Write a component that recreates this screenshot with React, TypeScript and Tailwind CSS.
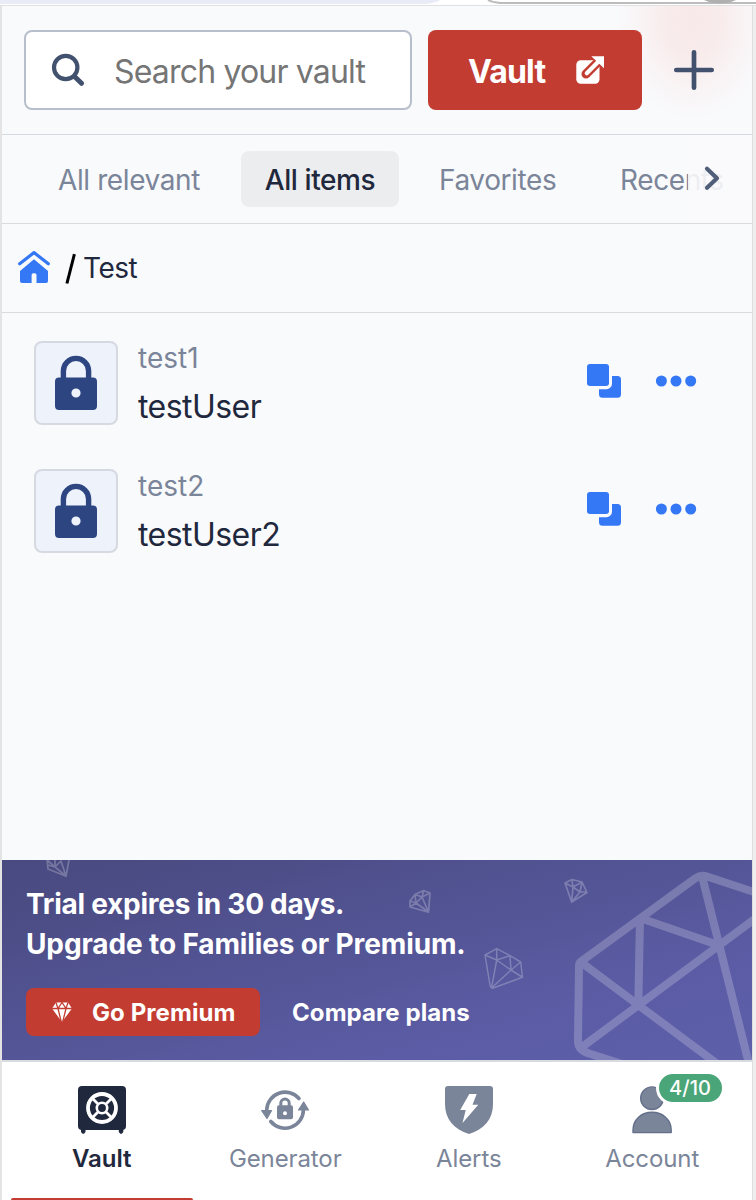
import React from "react";

function SearchIcon() {
  return (
    <svg width="34" height="34" viewBox="51 53 34 34" fill="none" stroke="#42526e" strokeLinecap="round">
      <circle cx="65.700" cy="67.500" r="11.700" strokeWidth="4.200" />
      <path d="M74.500 76.500L81.500 83.300" strokeWidth="5" />
    </svg>
  );
}

function ExternalIcon() {
  return (
    <svg width="30" height="30" viewBox="575 55 30 30">
      <rect x="576.300" y="60.200" width="23.200" height="23.600" rx="4.500" fill="#fff" />
      <path d="M586 74L603 57" stroke="#c33c32" strokeWidth="9" strokeLinecap="round" />
      <path d="M586.800 73.200L600 60" stroke="#fff" strokeWidth="4.200" strokeLinecap="round" />
      <path d="M591.300 56.200H604V68.200Z" fill="#fff" />
    </svg>
  );
}

function LockTile() {
  return (
    <div className="flex h-[84px] w-[84px] items-center justify-center rounded-lg border-2 border-[#d5d9e0] bg-[#eef2fb]">
      <svg width="44" height="56" viewBox="54 355 44 56">
        <path d="M63.400 380V371a12.600 12.600 0 0 1 25.200 0V380" fill="none" stroke="#2d4681" strokeWidth="5.400" />
        <path
          fillRule="evenodd"
          fill="#2d4681"
          d="M59 377.500H93a4 4 0 0 1 4 4V406a4 4 0 0 1-4 4H59a4 4 0 0 1-4-4V381.500a4 4 0 0 1 4-4ZM76 388.400a4.600 4.600 0 1 0 0 9.200a4.600 4.600 0 1 0 0-9.200Z"
        />
      </svg>
    </div>
  );
}

function CopyIcon() {
  return (
    <svg width="36" height="36" viewBox="586 363 36 36" fill="#3478f6">
      <rect x="587" y="364" width="22" height="22" rx="3" />
      <path d="M612 376H617.500a3.500 3.500 0 0 1 3.500 3.500V394.200a3.500 3.500 0 0 1-3.500 3.500H602.500a3.500 3.500 0 0 1-3.500-3.500V389.200H606.500a5.500 5.500 0 0 0 5.500-5.500Z" />
    </svg>
  );
}

function Item({ title, user }: { title: string; user: string }) {
  return (
    <div className="flex h-32 items-start pt-7 pl-8">
      <LockTile />
      <div className="ml-5 flex w-[448px] flex-col">
        <span className="-mt-[3px] h-10 text-[28px] leading-10 text-[#7b8599]">{title}</span>
        <span className="mt-[7px] h-11 text-[32px] leading-[44px] tracking-[-0.55px] text-[#1f283c]">{user}</span>
      </div>
      <div className="mt-[22px] flex items-center gap-8">
        <CopyIcon />
        <svg width="44" height="14" viewBox="654 374 44 14" fill="#3478f6">
          <circle cx="661.400" cy="381" r="5.500" />
          <circle cx="676" cy="381" r="5.500" />
          <circle cx="690.700" cy="381" r="5.500" />
        </svg>
      </div>
    </div>
  );
}

function BannerArt() {
  return (
    <svg width="750" height="200" viewBox="2 860 750 200" className="absolute inset-0" fill="none" stroke="#fff" strokeLinejoin="round">
      <defs>
        <filter id="soft" x="-10%" y="-50%" width="120%" height="200%">
          <feGaussianBlur stdDeviation="0.600" />
        </filter>
      </defs>
      <g opacity="0.21" strokeWidth="8">
        <path d="M760 894L707 876.500Q701 874.500 695 878.500L581 961.500Q579 963 579 966L578 1041Q578 1050 589 1053.500L625 1065" />
        <path d="M640 918L638.300 1005M640 918L718 945M702 876L749 1064M756 918L582 1047M582 963L716 1063" />
      </g>
      <path
        opacity="0.24"
        strokeWidth="1.500"
        d="M485 955L496.700 948.700L510 955.700L520.700 962L522.400 977.300L492.500 988.300Q490.500 988 490 985ZM485 955L496.700 960L496.700 949M510 955.700L496.700 960L511 970L510 955.700M520.700 962L511 970L522 977M496.700 960L491.500 988L511 970"
      />
      <g opacity="0.24" strokeWidth="1.700" filter="url(#soft)">
        <path d="M410 901L415 894.500L423.500 890.500L430 893L428.500 912.300L410 907ZM415 894.500L422 897L430 893M423.500 891L422 897L416 903L410 901M415 895L416 903L410 907M416 903L428.500 912L422 897" />
        <path d="M565 883L572 879.500L582 882L587 892.500L571.700 902ZM565 883L573 887L572 880M573 887L582 882L580 892L587 892M573 887L580 892L571.700 902L573 887" />
        <path d="M47 858L48 869L66 876.300L69 860M48 865L55 867L66 876L61 861L55 867L47 860M55 867L55 860" />
      </g>
    </svg>
  );
}

function VaultNavIcon() {
  return (
    <svg width="48" height="48" viewBox="78 1086 48 48">
      <rect x="78" y="1086" width="48" height="44" rx="4" fill="#1f283c" />
      <path d="M81 1129H85.500V1132L84 1133.800H82.500L81 1132ZM118.800 1129H123.300V1132L121.800 1133.800H120.300L118.800 1132Z" fill="#1f283c" />
      <g fill="none" stroke="#fff">
        <circle cx="102" cy="1108" r="14" strokeWidth="3.800" />
        <circle cx="102" cy="1108" r="5.200" strokeWidth="2.600" />
        <path strokeWidth="2.800" d="M93 1099L98.500 1104.500M111 1099L105.500 1104.500M93 1117L98.500 1111.500M111 1117L105.500 1111.500" />
      </g>
    </svg>
  );
}

function GeneratorNavIcon() {
  return (
    <svg width="48" height="48" viewBox="261 1086 48 48">
      <g fill="none" stroke="#7b8599" strokeWidth="3.600" strokeLinecap="round">
        <path d="M266.700 1110A18.400 18.400 0 0 1 299 1098.500" />
        <path d="M303.400 1110A18.400 18.400 0 0 1 270.800 1121.500" />
        <path d="M280.800 1106V1103.200a4.200 4.200 0 0 1 8.400 0V1106" strokeWidth="3" strokeLinecap="butt" />
      </g>
      <g fill="#7b8599" stroke="#7b8599" strokeWidth="1.200" strokeLinejoin="round">
        <path d="M261.600 1110.500H271.600L267 1118.500Z" />
        <path d="M298.500 1110H308.500L303.700 1102Z" />
      </g>
      <rect x="277" y="1105.300" width="16" height="14" rx="2" fill="#7b8599" />
      <circle cx="285" cy="1113.300" r="2" fill="#fff" />
    </svg>
  );
}

function AlertsNavIcon() {
  return (
    <svg width="48" height="48" viewBox="445 1086 48 48">
      <path d="M448 1086H490a3 3 0 0 1 3 3V1104C493 1119 484 1129.500 469 1134C454 1129.500 445 1119 445 1104V1089a3 3 0 0 1 3-3Z" fill="#7b8599" />
      <path d="M469.300 1094H476.700L472.500 1104.800H478.300L462.500 1123L465.700 1110H460.200Z" fill="#fff" />
    </svg>
  );
}

function AccountNavIcon() {
  return (
    <svg width="48" height="48" viewBox="628 1086 48 48" fill="#7b8599" stroke="#64708a" strokeWidth="1.400">
      <circle cx="652" cy="1098.200" r="11.300" />
      <path d="M633 1132.600V1130C633 1119.500 641.500 1112.300 652 1112.300S671.200 1119.500 671.200 1130V1132.600Z" strokeLinejoin="round" />
    </svg>
  );
}

function NavItem({ icon, label, active, badge }: { icon: React.ReactNode; label: string; active?: boolean; badge?: string }) {
  return (
    <div className="relative flex flex-1 flex-col items-center pt-6">
      {icon}
      <span
        className={
          active
            ? "mt-[9px] text-2xl leading-8 font-semibold text-[#1f283c]"
            : "mt-[9px] text-2xl leading-8 tracking-[-0.1px] text-[#7b8599]"
        }
      >
        {label}
      </span>
      {badge && (
        <span className="absolute top-[9px] left-[95px] flex h-[34px] w-[69px] items-center justify-center rounded-full border-[3px] border-white bg-[#4aa578] text-xl font-medium tracking-[0.1px] text-white">
          {badge}
        </span>
      )}
    </div>
  );
}

export default function App() {
  return (
    <div className="flex h-[1200px] w-[756px] flex-col overflow-hidden bg-white font-['Inter','Liberation_Sans',sans-serif]">
      <svg width="756" height="5" viewBox="0 0 756 5" className="shrink-0">
        <path d="M0 0H440Q436 3 425 4H0Z" fill="#e9ebf6" />
        <path d="M488 0Q494 3 505 3H756" fill="none" stroke="#bcbcbc" strokeWidth="2" />
        <path d="M704 0H736Q729 3.500 720 3.500T704 0Z" fill="#b0b0b0" />
      </svg>
      <div className="flex h-[1195px] border-t border-[#dfe0e1] bg-[#e4e4e5]">
        <main className="ml-0.5 flex w-[750px] flex-col overflow-hidden bg-[#f9fafc]">
          <header className="flex h-[129px] shrink-0 items-start border-b border-[#d5d9e0] bg-[radial-gradient(ellipse_76px_100px_at_691px_14px,#f8e9e9_0%,#f8ebeb_35%,#f9f3f4_65%,#f9fafc_100%)] pt-6 pl-[22px]">
            <div className="flex h-20 w-[388px] items-center rounded-lg border-2 border-[#b8bfcc] bg-white pl-[25px]">
              <SearchIcon />
              <span className="mt-[3px] ml-[29px] text-[32px] tracking-[-0.82px] whitespace-nowrap text-[#757575]">Search your vault</span>
            </div>
            <button className="ml-4 flex h-20 w-[214px] items-center rounded-lg bg-[#c33c32] pl-10 text-[32px] font-bold text-white">
              <span className="mt-[3px] w-[107px] text-left tracking-[-0.8px]">Vault</span>
              <ExternalIcon />
            </button>
            <svg width="44" height="80" viewBox="672 30 44 80" className="ml-[30px]">
              <path d="M676.300 70H711.700M694 52.300V87.700" stroke="#42526e" strokeWidth="4.700" strokeLinecap="round" />
            </svg>
          </header>
          <nav className="relative flex h-[89px] shrink-0 items-center border-b border-[#d8dadd] pt-px pl-8 text-[28px] tracking-[-0.4px] whitespace-nowrap text-[#7b8599]">
            <span className="w-[207px] pl-6">All relevant</span>
            <span className="-mt-px flex h-14 w-[158px] items-center justify-center rounded-lg bg-[#ecedef] pt-px font-medium text-[#1f283c]">All items</span>
            <span className="w-[221px] pl-10">Favorites</span>
            <span>Recents</span>
            <div className="absolute top-0 right-0 flex h-[88px] w-16 items-center bg-[#f9fafc]/90 pl-4">
              <svg width="16" height="26" viewBox="704 165 16 26" className="-mt-0.5">
                <path d="M707 168.800L717 178.200L707 187.700" fill="none" stroke="#505e79" strokeWidth="4.200" strokeLinecap="round" strokeLinejoin="round" />
              </svg>
            </div>
          </nav>
          <div className="flex h-[89px] shrink-0 items-center border-b border-[#d8dadd] pl-4 text-[28px]">
            <svg width="32" height="34" viewBox="18 250 32 34" className="-mt-0.5">
              <path d="M19.700 263.800L34 252.600L48.300 263.800" fill="none" stroke="#3478f6" strokeWidth="3.200" strokeLinecap="round" strokeLinejoin="round" />
              <path d="M20 271L34 259.300L48 271V281Q48 283 46 283H36.500V275Q36.500 273.200 34.700 273.200H33.300Q31.600 273.200 31.600 275V283H22Q20 283 20 281Z" fill="#3478f6" />
            </svg>
            <svg width="12" height="32" viewBox="65 252 12 32" className="ml-[15px]">
              <path d="M74.400 254.200L66.900 283.500" stroke="#000" strokeWidth="3" />
            </svg>
            <span className="ml-1.5 tracking-[-0.5px] text-[#1f283c]">Test</span>
          </div>
          <section className="h-[547px] shrink-0">
            <Item title="test1" user="testUser" />
            <Item title="test2" user="testUser2" />
          </section>
          <section className="relative h-[200px] shrink-0 bg-[linear-gradient(165deg,#494a80_0%,#4b4c84_12%,#5b5ca5_75%,#5d5fa9_100%)] pt-6 pl-6 text-white">
            <BannerArt />
            <div className="relative text-[28px] leading-10 font-bold whitespace-nowrap">
              <p className="tracking-[-0.26px]">Trial expires in 30 days.</p>
              <p className="tracking-[-0.13px]">Upgrade to Families or Premium.</p>
            </div>
            <div className="relative mt-6 flex items-center text-2xl font-bold tracking-[0.08px] whitespace-nowrap">
              <button className="flex h-12 w-[234px] items-center rounded-lg bg-[#c33c32] pl-[26px]">
                <svg width="20" height="20" viewBox="0 0 20 20" className="mr-5">
                  <path d="M4 0.500H16L20 6.500L10 20L0 6.500Z" fill="#fff" />
                  <path d="M0 6.500H20M4 0.500L6 6.500L10 0.500L14 6.500L16 0.500M6 6.500L9.300 20M14 6.500L10.700 20" fill="none" stroke="#c33c32" strokeWidth="1.300" />
                </svg>
                <span className="mt-0.5">Go Premium</span>
              </button>
              <span className="mt-0.5 ml-8">Compare plans</span>
            </div>
          </section>
          <footer className="flex h-[140px] shrink-0 flex-col border-t-2 border-[#d8dbe0] bg-white">
            <div className="flex h-[136px] px-2">
              <NavItem icon={<VaultNavIcon />} label="Vault" active />
              <NavItem icon={<GeneratorNavIcon />} label="Generator" />
              <NavItem icon={<AlertsNavIcon />} label="Alerts" />
              <NavItem icon={<AccountNavIcon />} label="Account" badge="4/10" />
            </div>
            <div className="ml-[9px] h-0.5 w-[182px] rounded-t-lg bg-[#c33c32]" />
          </footer>
        </main>
        <div className="h-full w-1 border-l border-[#dfdfdf] bg-[#efefef]" />
      </div>
    </div>
  );
}
